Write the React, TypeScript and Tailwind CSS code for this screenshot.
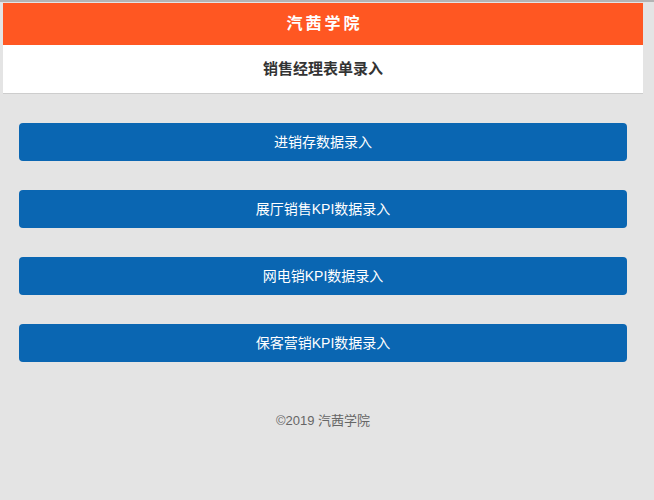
const font = { fontFamily: '"Liberation Sans", "Noto Sans CJK SC", sans-serif' };

const items = ["进销存数据录入", "展厅销售KPI数据录入", "网电销KPI数据录入", "保客营销KPI数据录入"];

export default function App() {
  return (
    <div className="min-h-[500px] w-[654px] bg-[#e4e4e4] border-t-2 border-[#b4b4b4] pt-px" style={font}>
      <div className="ml-[3px] w-[640px]">
        <header className="h-[42px] bg-[#ff5722] flex items-center justify-center">
          <h1 className="text-white text-[16px] font-bold tracking-[3px] pl-[3px]">汽茜学院</h1>
        </header>
        <div className="h-[49px] bg-white border-b border-[#cdcdcd] flex items-center justify-center">
          <h2 className="text-[15px] font-bold text-[#333]">销售经理表单录入</h2>
        </div>
        <div className="px-4 pt-[29px] flex flex-col gap-[29px]">
          {items.map((t) => (
            <button
              key={t}
              className="h-[38px] w-full rounded bg-[#0a66b2] text-white text-[14px] flex items-center justify-center"
            >
              {t}
            </button>
          ))}
        </div>
        <footer className="mt-[49px] text-center text-[13px] leading-5 text-[#666]">©2019 汽茜学院</footer>
      </div>
    </div>
  );
}
